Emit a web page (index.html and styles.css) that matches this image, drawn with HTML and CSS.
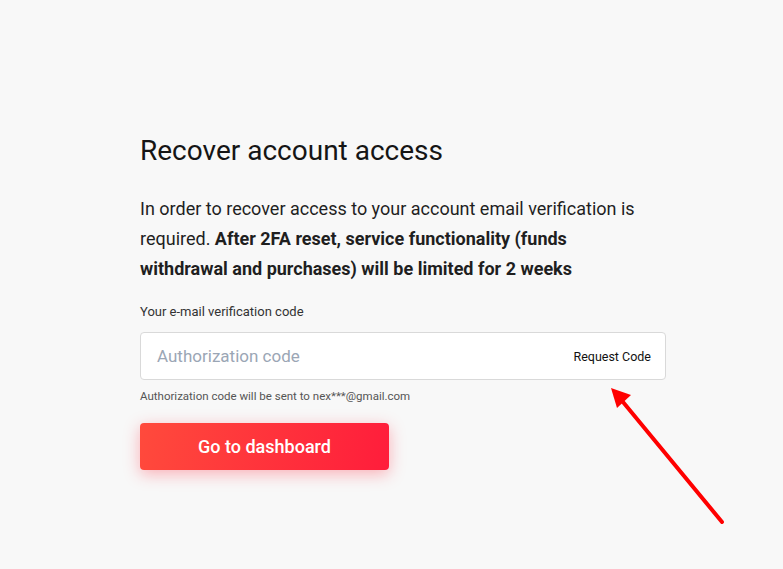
FILE: index.html
```html
<!DOCTYPE html>
<html>
<head>
<meta charset="utf-8">
<link rel="stylesheet" href="styles.css">
</head>
<body>
<main class="page">
  <section class="card">
    <h1 class="title">Recover account access</h1>
    <p class="lead">In order to recover access to your account email verification is required. <strong>After 2FA reset, service functionality (funds withdrawal and purchases) will be limited for 2 weeks</strong></p>
    <label class="label">Your e-mail verification code</label>
    <div class="field">
      <span class="placeholder">Authorization code</span>
      <span class="request">Request Code</span>
    </div>
    <p class="hint">Authorization code will be sent to nex***@gmail.com</p>
    <button class="btn">Go to dashboard</button>
  </section>
</main>
<svg class="arrow" width="783" height="569" viewBox="0 0 783 569">
  <line x1="722" y1="522" x2="623" y2="402" stroke="#ff0000" stroke-width="4" stroke-linecap="round"/>
  <polygon points="611,388 631,395 617,408" fill="#ff0000"/>
</svg>
</body>
</html>
```
FILE: styles.css
```css
html, body { margin: 0; padding: 0; }
body {
  background: #f8f8f8;
  font-family: Roboto, "Liberation Sans", sans-serif;
  color: #1a1a1a;
  width: 783px;
  height: 569px;
  overflow: hidden;
  position: relative;
}
.page { padding: 133px 0 0 140px; }
.card { width: 526px; display: flex; flex-direction: column; align-items: flex-start; }
.title {
  margin: 0;
  font-size: 28px;
  font-weight: 400;
  line-height: 36px;
  color: #151515;
}
.lead {
  margin: 25px 0 0;
  font-size: 18px;
  line-height: 30px;
  color: #1f1f1f;
  width: 508px;
}
.lead strong { font-weight: 700; }
.label {
  margin-top: 20px;
  font-size: 13px;
  color: #333;
  line-height: 16px;
}
.field {
  margin-top: 12px;
  box-sizing: border-box;
  width: 526px;
  height: 48px;
  background: #fff;
  border: 1px solid #d9d9d9;
  border-radius: 4px;
  display: flex;
  align-items: center;
  justify-content: space-between;
  padding: 0 14px 0 16px;
}
.placeholder { font-size: 17px; color: #9ba6b5; }
.request { font-size: 12.5px; color: #111; }
.hint {
  margin: 9px 0 0;
  font-size: 11.5px;
  color: #555;
  line-height: 15px;
}
.btn {
  margin-top: 19px;
  width: 249px;
  height: 47px;
  border: 0;
  border-radius: 4px;
  background: linear-gradient(100deg, #ff4a3c 0%, #ff1d3b 100%);
  box-shadow: 0 4px 16px rgba(255, 40, 60, 0.35);
  color: #fff;
  font-family: inherit;
  font-size: 18px;
  font-weight: 500;
}
.arrow { position: absolute; left: 0; top: 0; pointer-events: none; }
```
